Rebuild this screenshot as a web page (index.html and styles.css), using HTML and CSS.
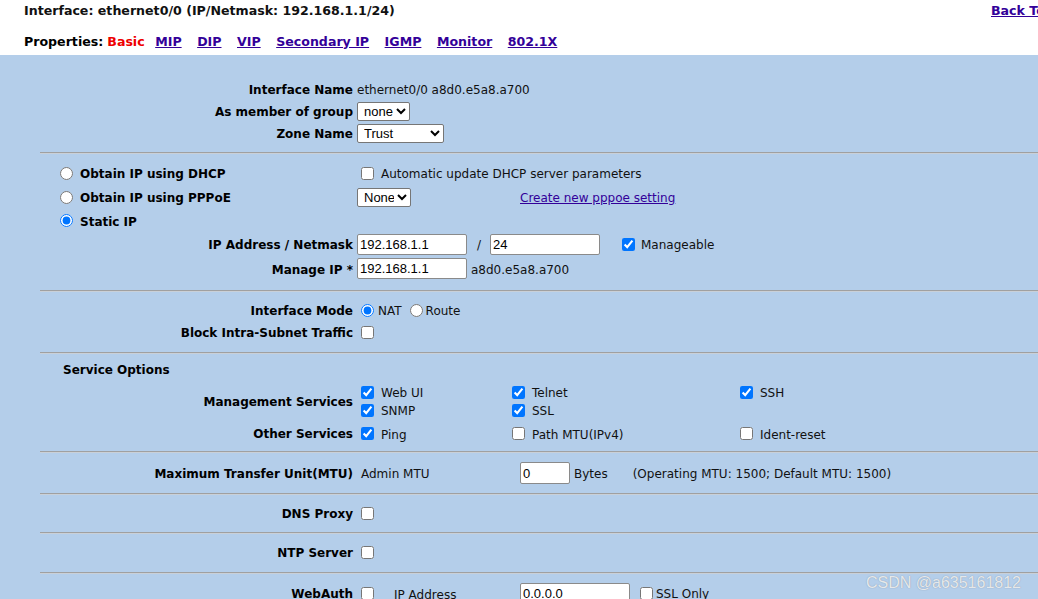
FILE: index.html
```html
<!DOCTYPE html>
<html lang="en">
<head>
<meta charset="utf-8">
<title>Interface ethernet0/0 - Basic</title>
<link rel="stylesheet" href="styles.css">
</head>
<body>
<header class="top">
  <div class="title-row">
    <span class="title">Interface: ethernet0/0 (IP/Netmask: 192.168.1.1/24)</span>
    <a class="link back" href="#">Back To Interface List</a>
  </div>
  <nav class="props">
    <span class="props-label">Properties:</span>
    <span class="tab current">Basic</span>
    <a class="link tab first" href="#">MIP</a>
    <a class="link tab" href="#">DIP</a>
    <a class="link tab" href="#">VIP</a>
    <a class="link tab" href="#">Secondary IP</a>
    <a class="link tab" href="#">IGMP</a>
    <a class="link tab" href="#">Monitor</a>
    <a class="link tab" href="#">802.1X</a>
  </nav>
</header>

<main class="panel">
  <section class="sec sec-1">
    <div class="row h22"><span class="lbl">Interface Name</span><span class="val txtv">ethernet0/0 a8d0.e5a8.a700</span></div>
    <div class="row h22"><span class="lbl">As member of group</span>
      <span class="val"><select class="sel sel-group"><option>none</option></select></span></div>
    <div class="row h22"><span class="lbl">Zone Name</span>
      <span class="val"><select class="sel sel-zone"><option>Trust</option></select></span></div>
  </section>

  <section class="sec sec-2">
    <div class="row h24">
      <label class="lbl-left"><input class="rd" type="radio" name="ipmode"><span class="t">Obtain IP using DHCP</span></label>
      <div class="cols2">
        <label class="opt"><input class="cb" type="checkbox"><span class="t">Automatic update DHCP server parameters</span></label>
      </div>
    </div>
    <div class="row h24">
      <label class="lbl-left"><input class="rd" type="radio" name="ipmode"><span class="t">Obtain IP using PPPoE</span></label>
      <div class="cols2">
        <select class="sel sel-pppoe"><option>None</option></select>
        <a class="link plain t" href="#">Create new pppoe setting</a>
      </div>
    </div>
    <div class="row h23">
      <label class="lbl-left"><input class="rd" type="radio" name="ipmode" checked><span class="t">Static IP</span></label>
      <span></span>
    </div>
    <div class="row h24">
      <span class="lbl">IP Address / Netmask</span>
      <div class="ipline">
        <input class="txt ip" type="text" value="192.168.1.1">
        <span class="slash t">/</span>
        <input class="txt ip" type="text" value="24">
        <label class="opt manage"><input class="cb" type="checkbox" checked><span class="t">Manageable</span></label>
      </div>
    </div>
    <div class="row h25">
      <span class="lbl">Manage IP *</span>
      <div class="ipline">
        <input class="txt ip" type="text" value="192.168.1.1">
        <span class="mac t">a8d0.e5a8.a700</span>
      </div>
    </div>
  </section>

  <section class="sec sec-3">
    <div class="row h22">
      <span class="lbl">Interface Mode</span>
      <div class="modes">
        <label class="ropt"><input class="rd" type="radio" name="mode" checked><span class="t">NAT</span></label>
        <label class="ropt route"><input class="rd" type="radio" name="mode"><span class="t">Route</span></label>
      </div>
    </div>
    <div class="row h22">
      <span class="lbl">Block Intra-Subnet Traffic</span>
      <span class="val"><input class="cb" type="checkbox"></span>
    </div>
  </section>

  <section class="sec sec-4">
    <div class="svc-title">Service Options</div>
    <div class="row mgmt">
      <span class="lbl">Management Services</span>
      <div class="svc-grid two">
        <label class="opt"><input class="cb" type="checkbox" checked><span class="t">Web UI</span></label>
        <label class="opt"><input class="cb" type="checkbox" checked><span class="t">Telnet</span></label>
        <label class="opt"><input class="cb" type="checkbox" checked><span class="t">SSH</span></label>
        <label class="opt"><input class="cb" type="checkbox" checked><span class="t">SNMP</span></label>
        <label class="opt"><input class="cb" type="checkbox" checked><span class="t">SSL</span></label>
        <span></span>
      </div>
    </div>
    <div class="row h22 other">
      <span class="lbl">Other Services</span>
      <div class="svc-grid one">
        <label class="opt"><input class="cb" type="checkbox" checked><span class="t">Ping</span></label>
        <label class="opt"><input class="cb" type="checkbox"><span class="t">Path MTU(IPv4)</span></label>
        <label class="opt"><input class="cb" type="checkbox"><span class="t">Ident-reset</span></label>
      </div>
    </div>
  </section>

  <section class="sec sec-5">
    <div class="row h22">
      <span class="lbl">Maximum Transfer Unit(MTU)</span>
      <div class="cols2">
        <span class="indent t">Admin MTU</span>
        <div class="mtu-line">
          <input class="txt mtu" type="text" value="0">
          <span class="bytes t">Bytes</span>
          <span class="oper t">(Operating MTU: 1500; Default MTU: 1500)</span>
        </div>
      </div>
    </div>
  </section>

  <section class="sec sec-6">
    <div class="row h22"><span class="lbl">DNS Proxy</span><span class="val"><input class="cb" type="checkbox"></span></div>
  </section>

  <section class="sec sec-7">
    <div class="row h22"><span class="lbl">NTP Server</span><span class="val"><input class="cb" type="checkbox"></span></div>
  </section>

  <section class="sec sec-8">
    <div class="row h22">
      <span class="lbl">WebAuth</span>
      <div class="cols2">
        <span class="wa-left"><input class="cb" type="checkbox"><span class="wa-ip">IP Address</span></span>
        <div class="mtu-line">
          <input class="txt ip" type="text" value="0.0.0.0">
          <label class="opt ssl"><input class="cb" type="checkbox"><span class="t">SSL Only</span></label>
        </div>
      </div>
    </div>
  </section>
</main>

<div class="watermark">CSDN @a635161812</div>
</body>
</html>
```

FILE: styles.css
```css
html, body {
  margin: 0;
  padding: 0;
}

body {
  font-family: "DejaVu Sans", Verdana, sans-serif;
  font-size: 12px;
  color: #111;
  background: #b4ceea;
  overflow: hidden;
  position: relative;
}

.link {
  color: #330099;
  text-decoration: underline;
}

/* ---------- header ---------- */
.top {
  background: #fff;
  height: 55px;
  box-sizing: border-box;
  padding-left: 24px;
  font-weight: bold;
  font-size: 12.6px;
  white-space: nowrap;
}

.title-row {
  display: grid;
  grid-template-columns: 967px max-content;
  padding-top: 4px;
  height: 14px;
  line-height: 14px;
}

.props {
  display: flex;
  align-items: center;
  margin-top: 17px;
  height: 14px;
  line-height: 14px;
}

.props-label {
  color: #000;
  margin-right: 4px;
}

.tab {
  margin-left: 15.5px;
}

.tab.current {
  margin-left: 0;
  color: #ee0000;
}

.tab.first {
  margin-left: 10.5px;
}

/* ---------- panel ---------- */
.panel {
  padding-left: 40px;
}

.sec {
  border-top: 1px solid #a0a0a0;
  box-shadow: inset 0 1px 0 #c9d0d8;
}

.sec-1 {
  border-top: none;
  box-shadow: none;
  padding: 23px 0 8px;
}

.sec-2 { padding: 8px 0 9px; }
.sec-3 { padding: 8px 0 9px; }
.sec-4 { padding: 6px 0 7px; }
.sec-5 { padding: 10px 0 9px; }
.sec-6 { padding: 8px 0 8px; }
.sec-7 { padding: 8px 0 9px; }
.sec-8 { padding: 9px 0 0; }

.row {
  display: grid;
  grid-template-columns: 313px 1fr;
  column-gap: 4px;
  align-items: center;
}

.h22 { height: 22px; }
.h23 { height: 23px; }
.h24 { height: 24px; }
.h25 { height: 25px; }

.lbl {
  text-align: right;
  font-weight: bold;
  color: #000;
  white-space: nowrap;
  padding-top: 2px;
}

/* text nudged 1px down to sit like the reference's baseline */
.t, .txtv {
  padding-top: 2px;
}

.lbl-left {
  display: flex;
  align-items: center;
  padding-left: 20px;
  font-weight: bold;
  color: #000;
  white-space: nowrap;
}

.lbl-left .rd {
  margin: 0 7px 0 0;
}

.val {
  display: flex;
  align-items: center;
}

.val > .cb {
  margin-left: 4px;
}

/* ---------- controls ---------- */
.cb, .rd {
  width: 13px;
  height: 13px;
  margin: 0;
  flex: none;
}

.opt {
  display: flex;
  align-items: center;
  gap: 7px;
  white-space: nowrap;
}

.opt .cb {
  margin-left: 4px;
}

.sel {
  font-family: "Liberation Sans", Arial, sans-serif;
  font-size: 13px;
  height: 19px;
  padding: 0 0 0 2px;
  color: #000;
  background: #fff;
  border: 1px solid #767676;
  border-radius: 2px;
}

.sel-group { width: 53px; }
.sel-zone { width: 87px; }
.sel-pppoe { width: 54px; }

.txt {
  font-family: "Liberation Sans", Arial, sans-serif;
  font-size: 13px;
  color: #000;
  box-sizing: border-box;
  height: 21px;
  padding: 1px 2px;
  margin: 0;
  border: 1px solid #8a8a8a;
  border-radius: 2px;
  background: #fff;
}

.ip { width: 110px; }
.mtu { width: 50px; height: 22px; }

.cols2 {
  display: grid;
  grid-template-columns: 163px auto;
  align-items: center;
  white-space: nowrap;
}

.ipline {
  display: flex;
  align-items: center;
  white-space: nowrap;
}

.slash {
  margin: 0 9px 0 10px;
  width: 4px;
}

.manage {
  margin-left: 18px;
  gap: 6px;
}

.mac {
  margin-left: 4px;
}

.modes {
  display: flex;
  align-items: center;
  white-space: nowrap;
}

.ropt {
  display: flex;
  align-items: center;
  gap: 4px;
}

.ropt .rd {
  margin-left: 4px;
}

.route {
  margin-left: 4px;
  gap: 3px;
}

/* ---------- services ---------- */
.svc-title {
  height: 20px;
  line-height: 22px;
  padding-left: 23px;
  font-weight: bold;
  color: #000;
}

.mgmt {
  margin-top: 4px;
}

.other {
  margin-top: 3px;
}

.svc-grid {
  display: grid;
  grid-template-columns: 151px 228px auto;
  align-items: center;
}

.svc-grid.two {
  grid-auto-rows: 18px;
}

.svc-grid.one {
  grid-auto-rows: 22px;
}

.svc-grid.one .opt {
  padding-top: 1px;
}

/* ---------- mtu / webauth ---------- */
.indent {
  padding-left: 4px;
}

.mtu-line {
  display: flex;
  align-items: center;
  white-space: nowrap;
}

.bytes {
  margin-left: 4px;
}

.oper {
  margin-left: 25px;
}

.wa-left {
  display: flex;
  align-items: center;
}

.wa-left .cb {
  margin-left: 4px;
}

.wa-ip {
  margin-left: 20px;
  padding-top: 4px;
}

.ssl {
  margin-left: 10px;
  gap: 3px;
}

.ssl .cb {
  margin-left: 0;
}

.watermark {
  position: absolute;
  left: 866px;
  top: 574px;
  font-family: "Liberation Sans", Arial, sans-serif;
  font-size: 16px;
  color: rgba(255, 255, 255, 0.78);
  text-shadow: 0 0 1px rgba(90, 90, 90, 0.55);
  white-space: nowrap;
}
```
